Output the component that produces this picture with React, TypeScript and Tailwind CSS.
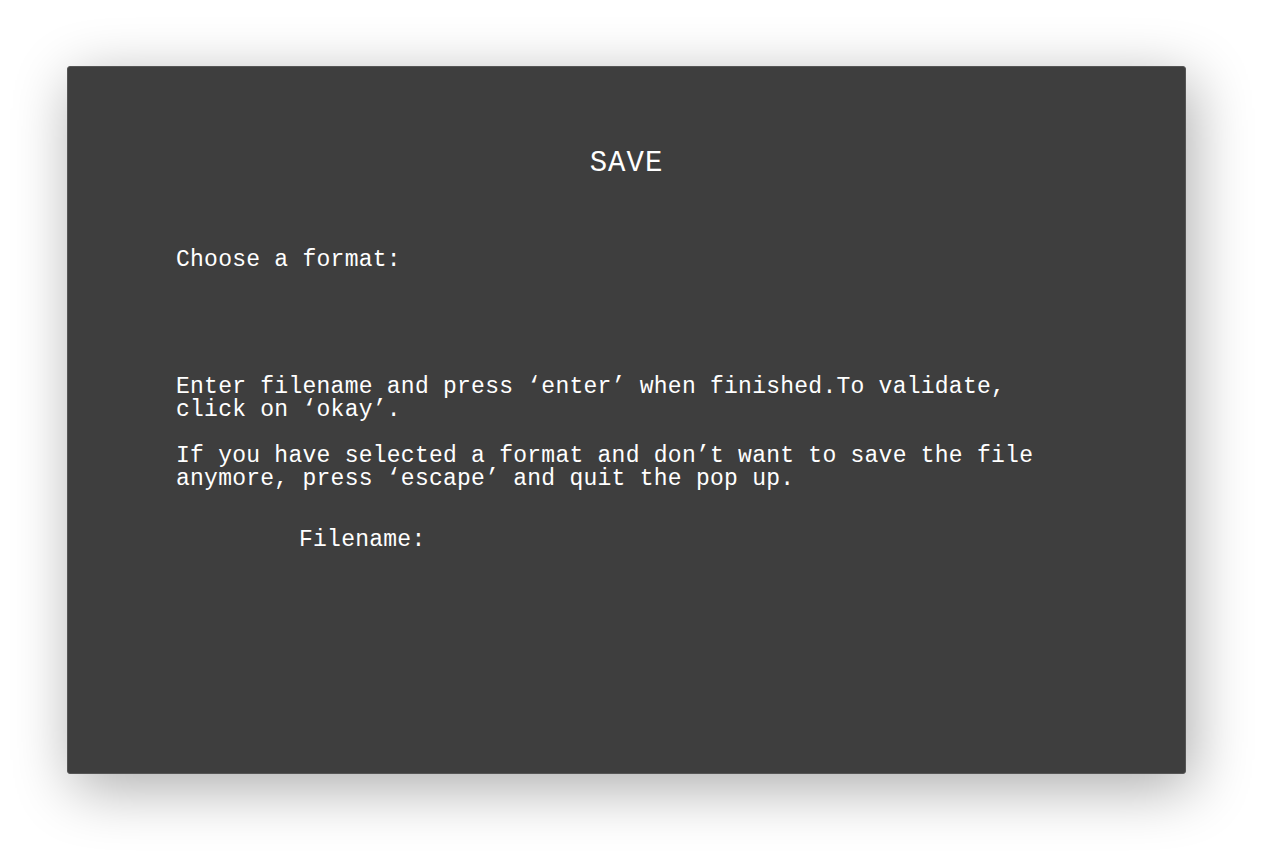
import React from "react";

const mono = { fontFamily: '"Liberation Mono", "DejaVu Sans Mono", monospace' };

export default function App() {
    return (
        <div className="min-h-[857px] w-[1267px] bg-white pl-[67px] pt-[66px]" style={mono}>
            <div className="flex h-[708px] w-[1119px] flex-col rounded-[3px] border border-[#555555] bg-[#3e3e3e] pl-[108px] pt-[74px] text-white shadow-[6px_14px_60px_rgba(0,0,0,0.33)]">
                <h1 className="-ml-[108px] text-center text-[29px] leading-[46px] tracking-[1px]">SAVE</h1>
                <p className="mt-[62px] text-[23px] leading-[23px] tracking-[0.25px]">Choose a format:</p>
                <div className="mt-[104px] flex flex-col gap-[23px] text-[23px] leading-[23px] tracking-[0.25px]">
                    <p>
                        Enter filename and press ‘enter’ when finished.To validate,
                        <br />
                        click on ‘okay’.
                    </p>
                    <p>
                        If you have selected a format and don’t want to save the file
                        <br />
                        anymore, press ‘escape’ and quit the pop up.
                    </p>
                </div>
                <label className="ml-[123px] mt-[38px] text-[23px] leading-[23px] tracking-[0.25px]">Filename:</label>
            </div>
        </div>
    );
}
